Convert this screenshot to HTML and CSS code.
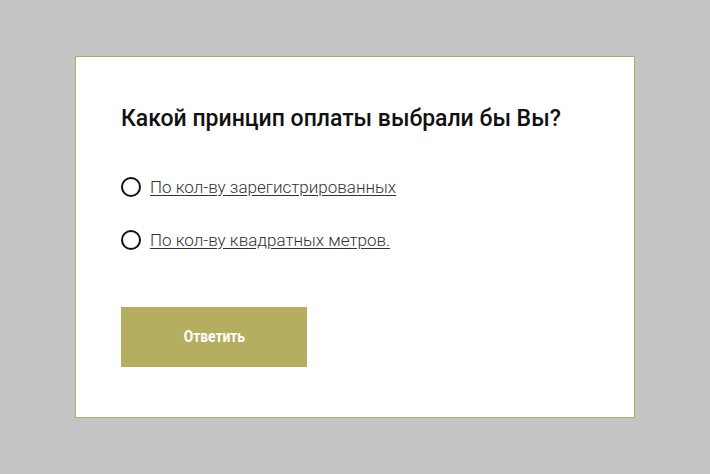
FILE: index.html
```html
<!DOCTYPE html>
<html lang="ru">
<head>
<meta charset="utf-8">
<link rel="stylesheet" href="styles.css">
</head>
<body>
<div class="page">
  <div class="card">
    <h2 class="title">Какой принцип оплаты выбрали бы Вы?</h2>
    <div class="options">
      <label class="option"><span class="radio"></span><span class="label">По кол-ву зарегистрированных</span></label>
      <label class="option"><span class="radio"></span><span class="label">По кол-ву квадратных метров.</span></label>
    </div>
    <button class="submit"><span class="submit-text">Ответить</span></button>
  </div>
</div>
</body>
</html>
```
FILE: styles.css
```css
html, body {
  margin: 0;
  padding: 0;
  background: #c4c4c4;
  font-family: Roboto, "Liberation Sans", sans-serif;
}
.page {
  padding: 56px 0 0 75px;
}
.card {
  box-sizing: border-box;
  width: 560px;
  height: 362px;
  background: #fff;
  border: 1px solid #b5ae60;
  padding: 47px 0 0 45px;
}
.title {
  margin: 0;
  font-size: 23px;
  font-weight: 500;
  color: #111;
  line-height: 30px;
}
.options {
  display: flex;
  flex-direction: column;
  gap: 28px;
  margin-top: 40px;
}
.option {
  display: flex;
  align-items: center;
  gap: 9px;
  height: 25px;
}
.radio {
  box-sizing: border-box;
  width: 20px;
  height: 20px;
  border: 2px solid #111;
  border-radius: 50%;
}
.label {
  font-size: 17px;
  font-weight: 300;
  color: #333;
  text-decoration: underline;
  text-underline-offset: 2px;
}
.submit {
  margin-top: 55px;
  width: 186px;
  height: 60px;
  border: 0;
  background: #b5ae60;
  color: #fff;
  font-family: Roboto, sans-serif;
  font-size: 15px;
  font-weight: 700;
}
.submit-text {
  display: inline-block;
  transform: scale(0.92, 1.08);
}
```
